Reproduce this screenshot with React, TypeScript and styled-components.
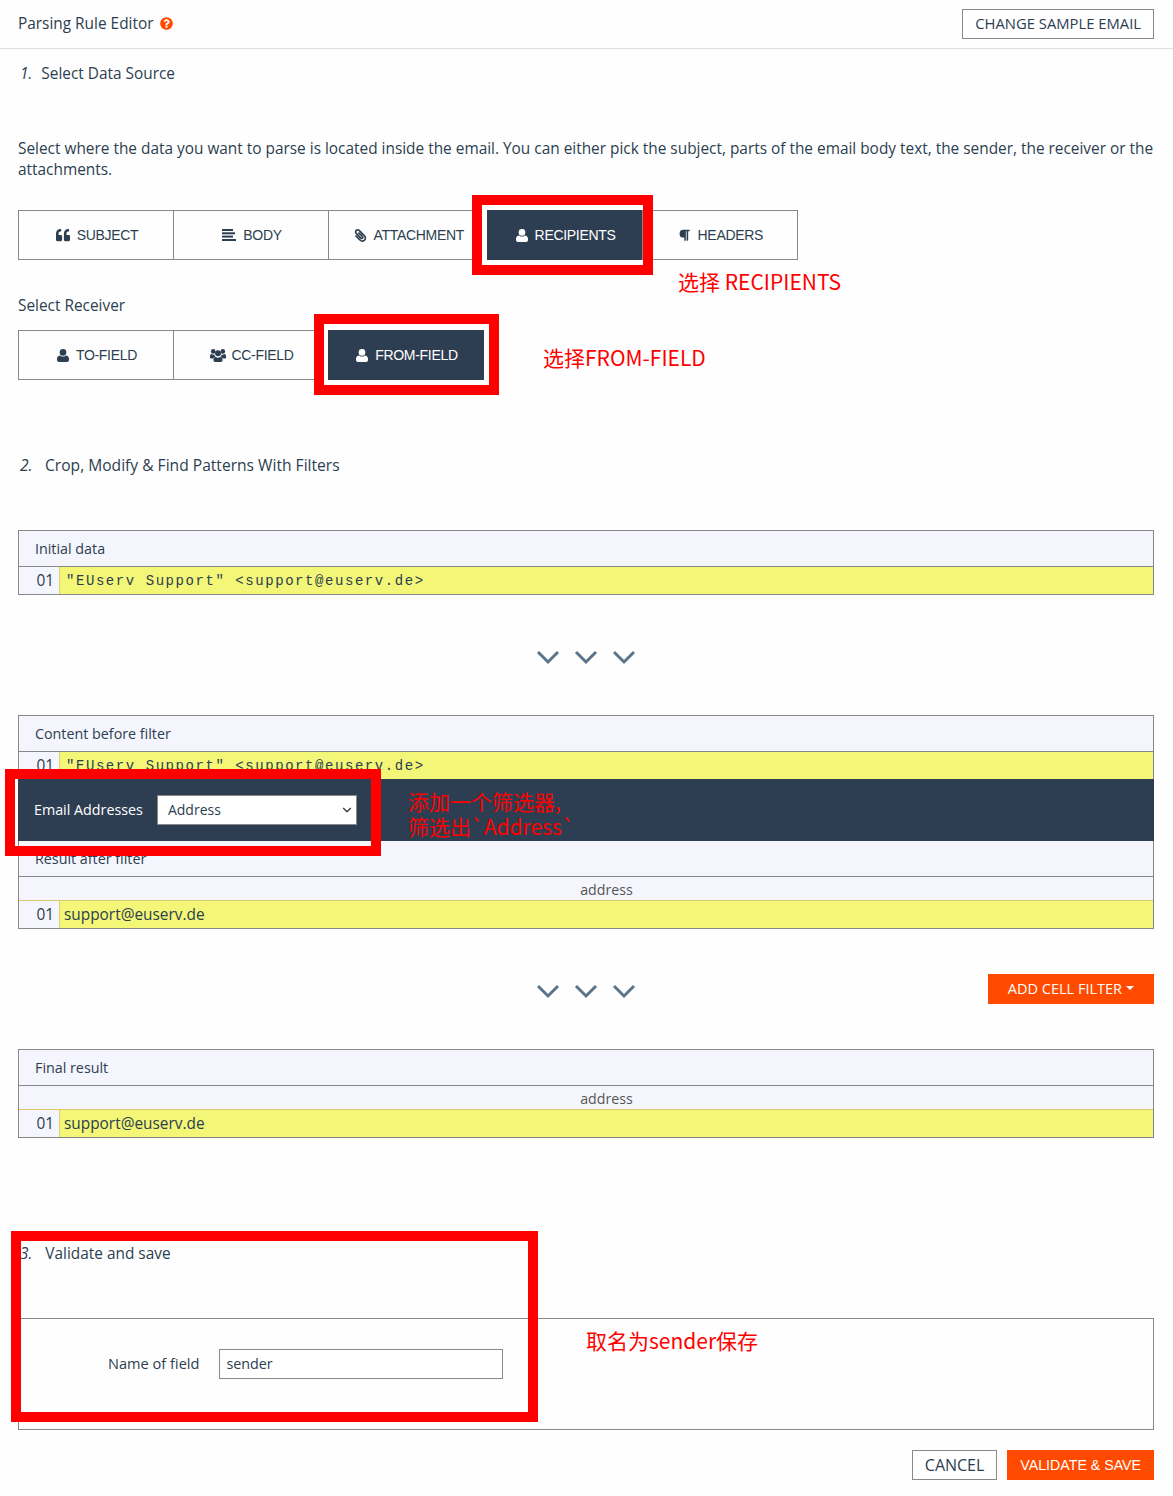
import React from 'react';
import styled, { createGlobalStyle } from 'styled-components';
import { ChevronDown } from 'lucide-react';
import { FaParagraph, FaPaperclip, FaQuestionCircle, FaQuoteLeft } from 'react-icons/fa';

const GlobalStyle = createGlobalStyle`
    html, body {
        margin: 0;
        padding: 0;
        background: #fefefe;
    }
    body {
        font-family: "Open Sans", "Noto Sans", sans-serif;
        font-size: 15.4px;
        line-height: 21px;
        color: #2c3e50;
    }
    * {
        box-sizing: border-box;
    }
`;

const DATA_LINE = '"EUserv Support" <support@euserv.de>';

const UserIcon = () => (
    <svg width='12' height='13' viewBox='0 0 12 13' fill='currentColor'>
        <circle cx='6' cy='3.4' r='3.3' />
        <path d='M0 11 V9.8 C0 7.8 1.4 6.4 3.2 6.4 C4 7.2 5 7.6 6 7.6 C7 7.6 8 7.2 8.8 6.4 C10.6 6.4 12 7.8 12 9.8 V11 C12 12.2 11 13 10 13 H2 C1 13 0 12.2 0 11 Z' />
    </svg>
);

const UsersIcon = () => (
    <svg width='16' height='13' viewBox='0 0 16 13' fill='currentColor'>
        <circle cx='3.2' cy='2.4' r='2.3' />
        <circle cx='12.8' cy='2.4' r='2.3' />
        <circle cx='8' cy='4.3' r='3' />
        <path d='M0 8.4 V7 C0 5.8 .8 5 1.8 5 C2.4 5.6 3.2 5.8 4.2 5.6 C4.4 6.6 4.9 7.4 5.6 8 C4.4 8.3 3.6 8.9 3.3 9.6 H1.2 C.5 9.6 0 9.1 0 8.4 Z' />
        <path d='M16 8.4 V7 C16 5.8 15.2 5 14.2 5 C13.6 5.6 12.8 5.8 11.8 5.6 C11.6 6.6 11.1 7.4 10.4 8 C11.6 8.3 12.4 8.9 12.7 9.6 H14.8 C15.5 9.6 16 9.1 16 8.4 Z' />
        <path d='M3.4 11 C3.4 9.2 4.4 7.9 5.8 7.9 C6.4 8.4 7.2 8.7 8 8.7 C8.8 8.7 9.6 8.4 10.2 7.9 C11.6 7.9 12.6 9.2 12.6 11 C12.6 12.2 11.8 13 10.8 13 H5.2 C4.2 13 3.4 12.2 3.4 11 Z' />
    </svg>
);

const AlignLeftIcon = () => (
    <svg width='14' height='12' viewBox='0 0 14 12' fill='currentColor'>
        <rect x='0' y='0' width='11' height='2' />
        <rect x='0' y='3.3' width='13' height='2' />
        <rect x='0' y='6.6' width='11' height='2' />
        <rect x='0' y='10' width='14' height='2' />
    </svg>
);

const Chevrons = () => (
    <ChevronGroup>
        {[0, 1, 2].map((i) => (
            <svg key={i} width='24' height='15' viewBox='0 0 24 15'>
                <path d='M2 2 L12 12 L22 2' fill='none' stroke='#5b7489' strokeWidth='3' />
            </svg>
        ))}
    </ChevronGroup>
);

const DataRow = ({ children, mono }: { children: React.ReactNode; mono?: boolean }) => (
    <Row>
        <RowNumber>01</RowNumber>
        <RowCell $mono={mono}>{children}</RowCell>
    </Row>
);

const ColumnRow = () => (
    <ColumnHeader>
        <span>address</span>
    </ColumnHeader>
);

const App = () => (
    <Page>
        <GlobalStyle />
        <Header>
            <HeaderTitle>
                Parsing Rule Editor
                <FaQuestionCircle size={13} color='#ff4a00' />
            </HeaderTitle>
            <ChangeButton>CHANGE SAMPLE EMAIL</ChangeButton>
        </Header>

        <StepTitle>
            <StepNumber $gap={9}>1.</StepNumber>Select Data Source
        </StepTitle>
        <Intro>
            Select where the data you want to parse is located inside the email. You can either pick the
            subject, parts of the email body text, the sender, the receiver or the attachments.
        </Intro>
        <TabGroup>
            <Tab>
                <FaQuoteLeft size={14} />
                SUBJECT
            </Tab>
            <Tab>
                <AlignLeftIcon />
                BODY
            </Tab>
            <Tab>
                <ClipIcon size={13} />
                ATTACHMENT
            </Tab>
            <Tab $active>
                <UserIcon />
                RECIPIENTS
            </Tab>
            <Tab>
                <FaParagraph size={12.5} />
                HEADERS
            </Tab>
        </TabGroup>
        <ReceiverLabel>Select Receiver</ReceiverLabel>
        <ReceiverTabs>
            <Tab>
                <UserIcon />
                TO-FIELD
            </Tab>
            <Tab $tight>
                <UsersIcon />
                CC-FIELD
            </Tab>
            <Tab $active>
                <UserIcon />
                FROM-FIELD
            </Tab>
        </ReceiverTabs>

        <FilterStepTitle>
            <StepNumber $gap={12.5}>2.</StepNumber>Crop, Modify &amp; Find Patterns With Filters
        </FilterStepTitle>
        <DataTable>
            <TableTitle>Initial data</TableTitle>
            <DataRow mono>{DATA_LINE}</DataRow>
        </DataTable>
        <FlowRow>
            <Chevrons />
        </FlowRow>
        <DataTable>
            <TableTitle>Content before filter</TableTitle>
            <DataRow mono>{DATA_LINE}</DataRow>
            <FilterBar>
                <FilterLabel>Email Addresses</FilterLabel>
                <SelectWrap>
                    <FilterSelect defaultValue='Address'>
                        <option>Address</option>
                    </FilterSelect>
                    <SelectArrow size={14} strokeWidth={2} />
                </SelectWrap>
            </FilterBar>
            <TableTitle>Result after filter</TableTitle>
            <ColumnRow />
            <DataRow>support@euserv.de</DataRow>
        </DataTable>
        <FlowRow>
            <Chevrons />
            <AddFilterButton>
                ADD CELL FILTER
                <Caret />
            </AddFilterButton>
        </FlowRow>
        <DataTable>
            <TableTitle>Final result</TableTitle>
            <ColumnRow />
            <DataRow>support@euserv.de</DataRow>
        </DataTable>

        <SaveStepTitle>
            <StepNumber $gap={13}>3.</StepNumber>Validate and save
        </SaveStepTitle>
        <SaveBox>
            <FieldLabel>Name of field</FieldLabel>
            <FieldInput defaultValue='sender' />
        </SaveBox>
        <Footer>
            <CancelButton>CANCEL</CancelButton>
            <SaveButton>VALIDATE &amp; SAVE</SaveButton>
        </Footer>

        {/* red marks drawn over the screenshot */}
        <RedFrame $x={472} $y={195} $w={181} $h={80} $gap='5px 0 5px 5px' />
        <RedFrame $x={314} $y={314} $w={185} $h={81} $gap='6px 5px 5px 4px' />
        <RedFrame $x={5} $y={769} $w={376} $h={87} />
        <RedFrame $x={11} $y={1231} $w={527} $h={191} />
        <Note $x={678} $y={269}>选择 RECIPIENTS</Note>
        <Note $x={543} $y={345}>选择FROM-FIELD</Note>
        <Note $x={408} $y={789}>
            添加一个筛选器,
            <br />
            筛选出`Address`
        </Note>
        <Note $x={586} $y={1328}>取名为sender保存</Note>
    </Page>
);

export default App;

const Page = styled.div`
    position: relative;
    width: 1173px;
    height: 1496px;
    padding: 0 19px 0 18px;
    overflow: hidden;
`;

const Header = styled.header`
    display: flex;
    align-items: center;
    justify-content: space-between;
    height: 49px;
    margin: 0 -19px 0 -18px;
    padding: 0 19px 1px 18px;
    border-bottom: 1px solid #dfdfdf;
`;

const HeaderTitle = styled.div`
    display: flex;
    align-items: center;
    gap: 7px;
`;

const OutlineButton = styled.button`
    height: 30px;
    padding: 0 12px;
    border: 1px solid #888;
    border-radius: 0;
    background: #fff;
    color: #2c3e50;
    font: inherit;
`;

const ChangeButton = styled(OutlineButton)`
    font-size: 14.8px;
`;

const CancelButton = styled(OutlineButton)`
    font-size: 16px;
`;

const StepTitle = styled.div`
    margin-top: 14px;
    padding-left: 2px;
`;

const FilterStepTitle = styled(StepTitle)`
    margin-top: 75px;
    font-size: 15.6px;
`;

const SaveStepTitle = styled(StepTitle)`
    margin-top: 105px;
`;

const StepNumber = styled.i<{ $gap: number }>`
    margin-right: ${(p) => p.$gap}px;
`;

const Intro = styled.p`
    margin: 54px 0 0;
`;

const TabGroup = styled.div`
    display: flex;
    margin-top: 30px;
`;

const ReceiverTabs = styled(TabGroup)`
    margin-top: 14px;
`;

const ReceiverLabel = styled.div`
    margin-top: 35px;
`;

const Tab = styled.div<{ $active?: boolean; $tight?: boolean }>`
    display: flex;
    align-items: center;
    justify-content: center;
    gap: ${(p) => (p.$tight ? 5 : 7)}px;
    min-width: 156px;
    height: 50px;
    padding: 0 22.5px 0 24.5px;
    border: 1px solid ${(p) => (p.$active ? '#2e3e52' : '#888')};
    background: ${(p) => (p.$active ? '#2e3e52' : 'transparent')};
    color: ${(p) => (p.$active ? '#fff' : '#2c3e50')};
    font-family: "Liberation Sans", Arial, sans-serif;
    font-size: 14px;
    letter-spacing: -0.3px;
    & + & {
        margin-left: -1px;
    }
`;

const ClipIcon = styled(FaPaperclip)`
    transform: scaleX(-1);
`;

const DataTable = styled.section`
    display: flex;
    flex-direction: column;
    margin-top: 54px;
    border: 1px solid #888;
    background: #f5f5fd;
`;

const TableTitle = styled.div`
    display: flex;
    align-items: center;
    height: 36px;
    padding-left: 16px;
    border-bottom: 1px solid #888;
    font-size: 14.3px;
`;

const ColumnHeader = styled.div`
    height: 24px;
    padding-left: 41px;
    border-bottom: 1px solid #d9c96c;
    color: #555;
    font-size: 14.2px;
    line-height: 26px;
    text-align: center;
`;

const Row = styled.div`
    display: flex;
    height: 27px;
`;

const RowNumber = styled.div`
    width: 41px;
    padding-right: 5px;
    border-right: 1px solid #d9cf6c;
    line-height: 27px;
    text-align: right;
`;

const RowCell = styled.div<{ $mono?: boolean }>`
    flex: 1;
    padding: ${(p) => (p.$mono ? '1px 0 0 6px' : '0 0 0 4px')};
    background: #f3f676;
    font-family: ${(p) => (p.$mono ? '"Liberation Mono", "Courier New", monospace' : 'inherit')};
    font-size: ${(p) => (p.$mono ? '14px' : 'inherit')};
    letter-spacing: ${(p) => (p.$mono ? '1.56px' : 'normal')};
    line-height: ${(p) => (p.$mono ? 26 : 27)}px;
    white-space: pre;
`;

const FilterBar = styled.div`
    display: flex;
    align-items: center;
    gap: 14px;
    height: 62px;
    margin: 0 -1px;
    padding-left: 16px;
    background: #2e3e52;
`;

const FilterLabel = styled.span`
    margin-bottom: 1px;
    color: #fff;
    font-size: 14.3px;
`;

const SelectWrap = styled.div`
    position: relative;
    width: 200px;
    height: 30px;
`;

const FilterSelect = styled.select`
    width: 100%;
    height: 100%;
    padding: 0 0 1px 10px;
    border: 1px solid #888;
    border-radius: 0;
    appearance: none;
    background: #fff;
    color: #2c3e50;
    font: inherit;
    font-size: 14px;
`;

const SelectArrow = styled(ChevronDown)`
    position: absolute;
    top: 8px;
    right: 3px;
    color: #333;
    pointer-events: none;
`;

const FlowRow = styled.div`
    display: grid;
    grid-template-columns: 1fr auto 1fr;
    align-items: center;
    height: 30px;
    margin-top: 45px;

    & + ${DataTable} {
        margin-top: 45px;
    }
`;

const ChevronGroup = styled.div`
    grid-column: 2;
    display: flex;
    gap: 14px;
    margin-top: 4px;
`;

const AddFilterButton = styled.button`
    display: flex;
    align-items: center;
    justify-self: end;
    gap: 4px;
    height: 30px;
    padding: 0 20px 2px;
    border: 0;
    border-radius: 0;
    background: #ff4a00;
    color: #fff;
    font: inherit;
    font-size: 14.5px;
`;

const Caret = styled.span`
    border-top: 4px solid #fff;
    border-left: 4px solid transparent;
    border-right: 4px solid transparent;
`;

const SaveBox = styled.section`
    display: flex;
    align-items: flex-start;
    gap: 20px;
    height: 112px;
    margin-top: 54px;
    padding: 30px 0 0 89px;
    border: 1px solid #888;
    font-size: 14.3px;
`;

const FieldLabel = styled.label`
    min-width: 91px;
    font-size: 14.6px;
    line-height: 29px;
`;

const FieldInput = styled.input`
    width: 284px;
    height: 30px;
    padding: 0 6px 1px;
    border: 1px solid #888;
    border-radius: 0;
    background: #fff;
    color: #2c3e50;
    font: inherit;
`;

const Footer = styled.footer`
    display: flex;
    justify-content: flex-end;
    gap: 10px;
    margin-top: 20px;
`;

const SaveButton = styled.button`
    height: 30px;
    padding: 0 13px;
    border: 0;
    border-radius: 0;
    background: #ff4a00;
    color: #fff;
    font-family: "Liberation Sans", Arial, sans-serif;
    font-size: 14.2px;
`;

const RedFrame = styled.div<{ $x: number; $y: number; $w: number; $h: number; $gap?: string }>`
    position: absolute;
    left: ${(p) => p.$x}px;
    top: ${(p) => p.$y}px;
    width: ${(p) => p.$w}px;
    height: ${(p) => p.$h}px;
    border: 10px solid #ff0000;

    &::before {
        content: '';
        position: absolute;
        inset: 0;
        border-style: solid;
        border-color: #fff;
        border-width: ${(p) => p.$gap || 0};
    }
`;

const Note = styled.div<{ $x: number; $y: number }>`
    position: absolute;
    left: ${(p) => p.$x}px;
    top: ${(p) => p.$y}px;
    color: #ff0000;
    font-family: "Noto Sans CJK SC", "Noto Sans", sans-serif;
    font-size: 21px;
    line-height: 25px;
    white-space: nowrap;
`;
